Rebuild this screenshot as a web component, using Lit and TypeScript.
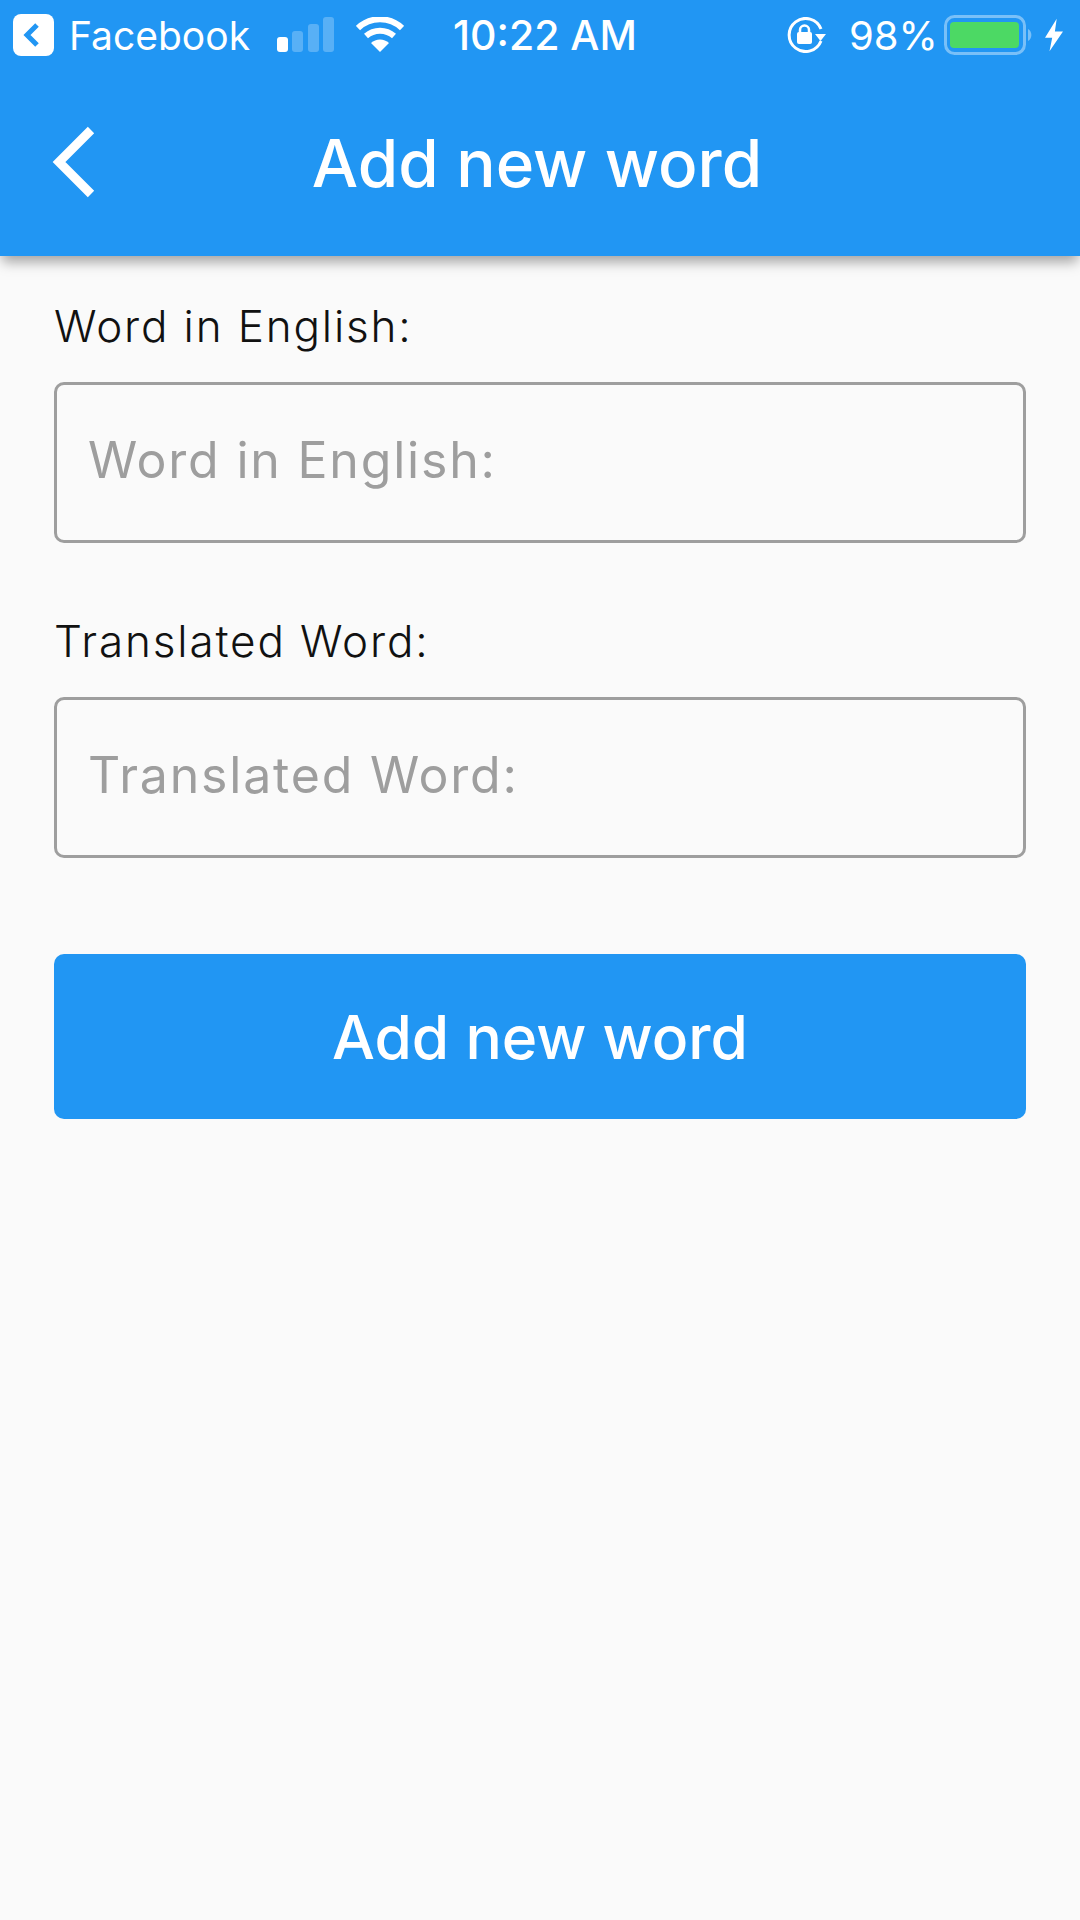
import { LitElement, html, css } from 'lit';
import { customElement } from 'lit/decorators.js';

@customElement('app-root')
class AppRoot extends LitElement {
  static styles = css`
    :host {
      display: block;
      width: 1080px;
      height: 1920px;
      background: #fafafa;
      font-family: Inter, Roboto, sans-serif;
      overflow: hidden;
    }
    svg {
      display: block;
      flex: none;
    }

    .app-bar {
      height: 256px;
      background: #2196f3;
      color: #fff;
      box-shadow: 0 8px 12px -2px rgba(0, 0, 0, 0.35);
      position: relative;
    }

    .status {
      height: 70px;
      display: flex;
      align-items: center;
      padding-left: 13px;
      font-size: 39px;
      white-space: nowrap;
    }
    .carrier {
      margin-left: 15px;
      width: 208px;
    }
    .wifi {
      margin-left: 21px;
    }
    .time {
      margin-left: 49px;
      width: 186px;
      font-size: 41px;
      font-weight: 500;
    }
    .lock {
      margin-left: 148px;
    }
    .percent {
      margin-left: 22px;
      width: 95px;
      font-size: 40px;
    }
    .bolt {
      margin-left: 11px;
    }

    .nav {
      height: 186px;
      display: flex;
      align-items: center;
      justify-content: center;
      position: relative;
    }
    .back {
      position: absolute;
      left: 50px;
      top: 54px;
    }
    .title {
      font-size: 65.500px;
      font-weight: 500;
      margin-left: -6px;
    }

    .form {
      padding: 40px 54px 0;
      display: flex;
      flex-direction: column;
    }
    .label {
      font-size: 44px;
      line-height: 60px;
      font-weight: 300;
      letter-spacing: 1.850px;
      color: #111;
    }
    .field {
      height: 161px;
      box-sizing: border-box;
      margin-top: 26px;
      margin-bottom: 68px;
      border: 3px solid #9e9e9e;
      border-radius: 10px;
      padding-left: 31px;
      display: flex;
      align-items: center;
      font-size: 50px;
      letter-spacing: 1.800px;
      color: #9e9e9e;
    }
    .field span {
      margin-top: -6px;
    }
    .submit {
      height: 165px;
      margin-top: 28px;
      background: #2196f3;
      border-radius: 10px;
      display: flex;
      align-items: center;
      justify-content: center;
      color: #fff;
      font-size: 60.500px;
      font-weight: 500;
    }
  `;

  render() {
    return html`
      <div class="app-bar">
        <div class="status">
          <svg width="41" height="42" viewBox="0 0 41 42">
            <rect width="41" height="42" rx="8" fill="#fff" />
            <path d="M24 11 14 21l10 10" fill="none" stroke="#2196f3" stroke-width="5" />
          </svg>
          <span class="carrier">Facebook</span>
          <svg width="58" height="36" viewBox="0 0 58 36">
            <rect x="0" y="20" width="11" height="15" rx="3" fill="#fff" />
            <rect x="15" y="14" width="11" height="21" rx="3" fill="#fff" fill-opacity=".25" />
            <rect x="31" y="7" width="11" height="28" rx="3" fill="#fff" fill-opacity=".25" />
            <rect x="46" y="0" width="11" height="35" rx="3" fill="#fff" fill-opacity=".25" />
          </svg>
          <svg class="wifi" width="48" height="36" viewBox="0 0 48 36">
            <path d="M2 11a32 32 0 0 1 44 0" fill="none" stroke="#fff" stroke-width="6" />
            <path d="M10 19a21 21 0 0 1 28 0" fill="none" stroke="#fff" stroke-width="6" />
            <path d="M15 26a13 13 0 0 1 18 0L24 35z" fill="#fff" />
          </svg>
          <span class="time">10:22 AM</span>
          <svg class="lock" width="40" height="36" viewBox="0 0 40 36">
            <path d="M34 12A16.500 16.500 0 1 0 34 24" fill="none" stroke="#fff" stroke-width="3" />
            <path d="M28 17h11l-5.500 7z" fill="#fff" />
            <rect x="10" y="15" width="15" height="12" rx="2" fill="#fff" />
            <path d="M13 16v-3a4.500 4.500 0 0 1 9 0v3" fill="none" stroke="#fff" stroke-width="2.500" />
          </svg>
          <span class="percent">98%</span>
          <svg width="90" height="40" viewBox="0 0 90 40">
            <rect x="1.500" y="1.500" width="79" height="37" rx="9" fill="none" stroke="#fff" stroke-opacity=".4" stroke-width="3" />
            <rect x="6" y="7" width="69" height="26" rx="4" fill="#4cd964" />
            <path d="M84 14a7 7 0 0 1 0 12z" fill="#fff" fill-opacity=".4" />
          </svg>
          <svg class="bolt" width="18" height="36" viewBox="0 0 20 36">
            <path d="M13 0 0 21h8L5 36 20 14h-9z" fill="#fff" />
          </svg>
        </div>
        <div class="nav">
          <svg class="back" width="50" height="76" viewBox="0 0 50 76">
            <path d="M41 6 9 38l32 32" fill="none" stroke="#fff" stroke-width="9" />
          </svg>
          <span class="title">Add new word</span>
        </div>
      </div>
      <div class="form">
        <div class="label">Word in English:</div>
        <div class="field"><span>Word in English:</span></div>
        <div class="label">Translated Word:</div>
        <div class="field"><span>Translated Word:</span></div>
        <div class="submit">Add new word</div>
      </div>
    `;
  }
}
